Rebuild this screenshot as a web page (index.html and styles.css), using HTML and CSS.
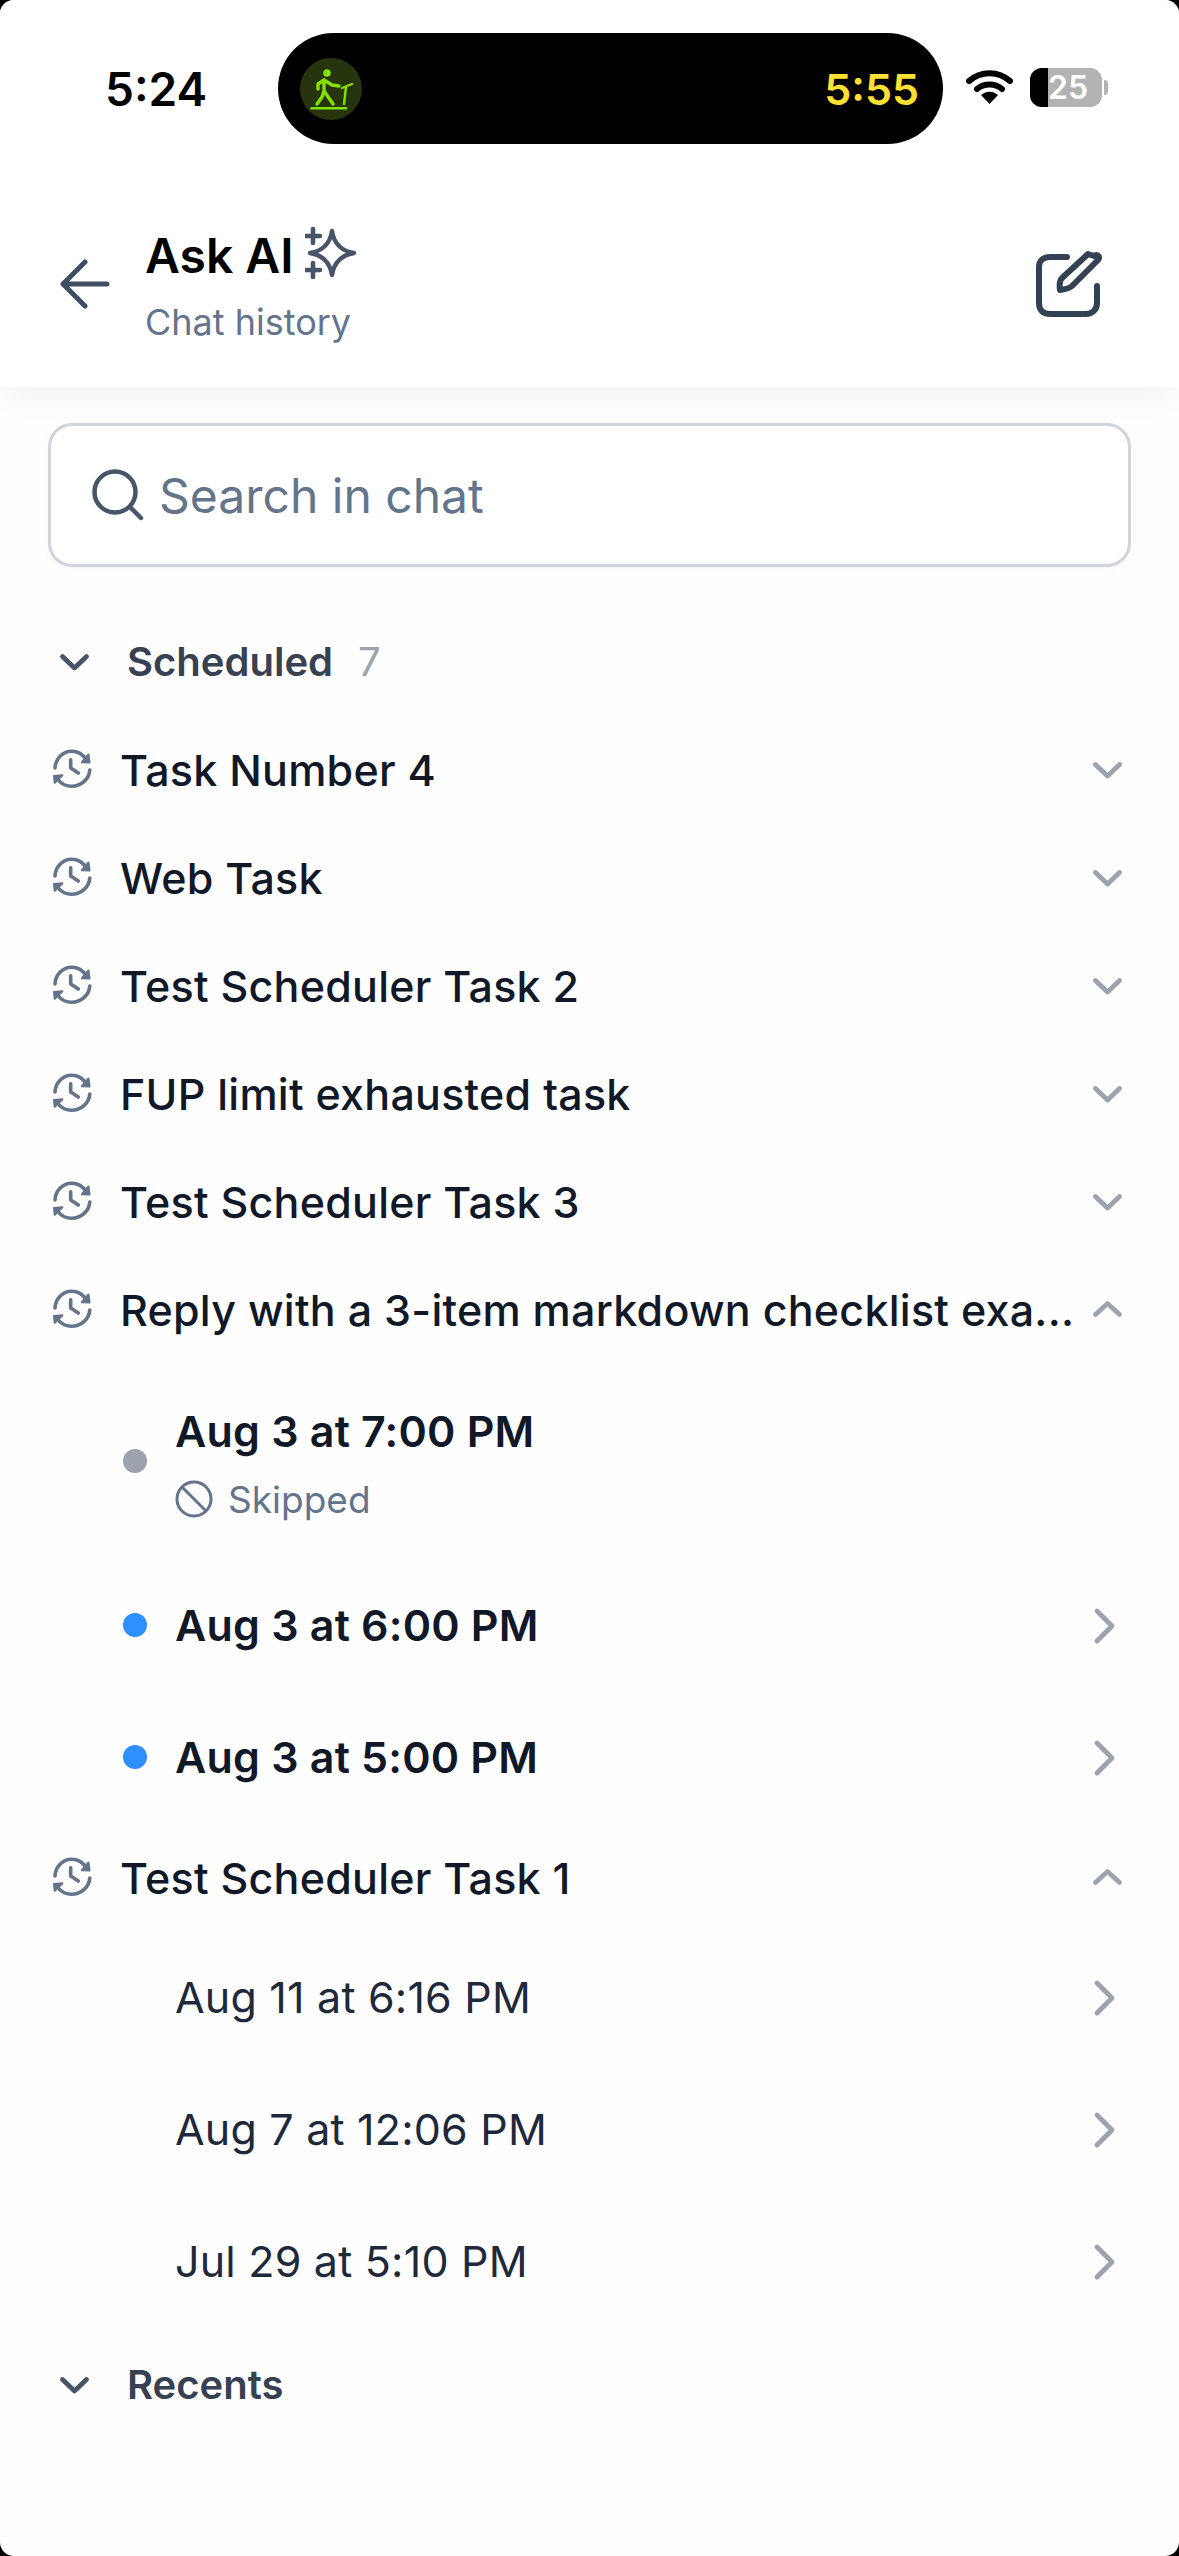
FILE: index.html
```html
<!DOCTYPE html>
<html lang="en">
<head>
    <meta charset="UTF-8">
    <meta name="viewport" content="width=device-width, initial-scale=1.0">
    <title>Ask AI - Chat history</title>
    <link rel="stylesheet" href="styles.css">
</head>
<body>
    <!-- Icons used several times -->
    <svg class="icon-defs" aria-hidden="true">
        <symbol id="i-history" viewBox="0 0 40 40">
            <path d="M3 19C3.500 9.500 11 2.300 19.700 2.300C26 2.300 31 5.500 34.200 10.700" fill="none" stroke="currentColor" stroke-width="3.600" stroke-linecap="round"/>
            <path d="M36.500 5.500L37.600 13.600L29.800 13.200Z" fill="currentColor" stroke="currentColor" stroke-width="2" stroke-linejoin="round"/>
            <path d="M37.800 21C37 30.500 29 37.300 19.700 37.300C14 37.300 9.500 35 6.300 31" fill="none" stroke="currentColor" stroke-width="3.600" stroke-linecap="round"/>
            <path d="M2 27L2.700 33.800L10.400 26.200Z" fill="currentColor" stroke="currentColor" stroke-width="2" stroke-linejoin="round"/>
            <path d="M18.700 10.700V19L26.300 24" fill="none" stroke="currentColor" stroke-width="3.600" stroke-linecap="round" stroke-linejoin="round"/>
        </symbol>
        <symbol id="i-down" viewBox="0 0 48 48">
            <path d="M12.500 19.500L24.500 31L36.500 19.500" fill="none" stroke="currentColor" stroke-width="4.800" stroke-linecap="round" stroke-linejoin="round"/>
        </symbol>
        <symbol id="i-up" viewBox="0 0 48 48">
            <path d="M12.500 29.500L24.500 18.500L36.500 29.500" fill="none" stroke="currentColor" stroke-width="4.800" stroke-linecap="round" stroke-linejoin="round"/>
        </symbol>
        <symbol id="i-right" viewBox="0 0 48 48">
            <path d="M16 10L31 25L16 40" fill="none" stroke="currentColor" stroke-width="4.800" stroke-linecap="round" stroke-linejoin="round"/>
        </symbol>
    </svg>

    <div class="app">
        <!-- Status bar + header -->
        <header class="top-bar">
            <div class="status-bar">
                <span class="clock">5:24</span>
                <div class="island">
                    <div class="activity-icon">
                        <svg width="62" height="62" viewBox="0 0 62 62">
                            <circle cx="27" cy="15" r="3.800" fill="#84e000"/>
                            <path d="M24 22L24 34M24 22L18 26L18 31M24 22L32 27L39 28M24 33L33 46M24 33L22 39L17 46" fill="none" stroke="#84e000" stroke-width="3.400" stroke-linecap="round" stroke-linejoin="round"/>
                            <path d="M44 46L46 29M42 30L52 26" fill="none" stroke="#84e000" stroke-width="2.400" stroke-linecap="round" stroke-linejoin="round"/>
                            <path d="M11 49H47V51.500H10Z" fill="#84e000"/>
                        </svg>
                    </div>
                    <span class="activity-time">5:55</span>
                </div>
                <svg class="wifi" width="47" height="36" viewBox="0 0 47 36">
                    <path d="M3 12C14.500 1.500 32.500 1.500 44 12" fill="none" stroke="#000" stroke-width="6" stroke-linecap="round"/>
                    <path d="M11 20C18 14 29 14 36 20" fill="none" stroke="#000" stroke-width="6" stroke-linecap="round"/>
                    <path d="M15 26C20 21.500 27 21.500 32 26L23.500 35Z" fill="#000"/>
                </svg>
                <div class="battery">
                    <div class="battery-body">
                        <div class="battery-level"></div>
                        <span class="battery-text">25</span>
                    </div>
                    <div class="battery-nub"></div>
                </div>
            </div>

            <div class="title-row">
                <button class="icon-btn back-btn" aria-label="Back">
                    <svg width="52" height="52" viewBox="0 0 52 52">
                        <path d="M27 5L5 27L27 49M5.500 27H49" fill="none" stroke="#3f4d63" stroke-width="5" stroke-linecap="round" stroke-linejoin="round"/>
                    </svg>
                </button>
                <div class="title-text">
                    <div class="title-line">
                        <h1>Ask AI</h1>
                        <svg class="sparkle" width="52" height="52" viewBox="0 0 52 52">
                            <path d="M27 4Q30 23 49 26Q30 29 27 48Q24 29 5 26Q24 23 27 4Z" fill="none" stroke="#475569" stroke-width="4.400" stroke-linejoin="round"/>
                            <path d="M8 2V16M1 9H15M8 36V50M1 43H15" fill="none" stroke="#475569" stroke-width="4.600" stroke-linecap="round"/>
                        </svg>
                    </div>
                    <div class="subtitle">Chat history</div>
                </div>
                <button class="icon-btn edit-btn" aria-label="New chat">
                    <svg width="68" height="68" viewBox="0 0 68 68">
                        <path d="M31 8H14C7 8 3 12 3 18V54C3 61 7 65 14 65H50C56 65 61 61 61 54V37" fill="none" stroke="#334155" stroke-width="6" stroke-linecap="round"/>
                        <path d="M58 6C61 3 65 7 62 10L36 36C34 38 31 39 24 40C23 33 24 30 26 28L52 4Z" transform="translate(0 1)" fill="none" stroke="#334155" stroke-width="6" stroke-linejoin="round"/>
                    </svg>
                </button>
            </div>
        </header>

        <main class="content">
            <div class="search-box">
                <svg class="search-icon" width="52" height="52" viewBox="0 0 52 52">
                    <circle cx="23" cy="23" r="20.500" fill="none" stroke="#475569" stroke-width="4.500"/>
                    <path d="M38 38L49 49" fill="none" stroke="#475569" stroke-width="4.500" stroke-linecap="round"/>
                </svg>
                <span class="search-placeholder">Search in chat</span>
            </div>

            <!-- Scheduled -->
            <div class="section-row">
                <svg class="section-chevron"><use href="#i-down"/></svg>
                <span class="section-name">Scheduled</span>
                <span class="section-count">7</span>
            </div>

            <div class="task-row">
                <svg class="task-icon"><use href="#i-history"/></svg>
                <span class="task-name">Task Number 4</span>
                <svg class="chevron"><use href="#i-down"/></svg>
            </div>
            <div class="task-row">
                <svg class="task-icon"><use href="#i-history"/></svg>
                <span class="task-name">Web Task</span>
                <svg class="chevron"><use href="#i-down"/></svg>
            </div>
            <div class="task-row">
                <svg class="task-icon"><use href="#i-history"/></svg>
                <span class="task-name">Test Scheduler Task 2</span>
                <svg class="chevron"><use href="#i-down"/></svg>
            </div>
            <div class="task-row">
                <svg class="task-icon"><use href="#i-history"/></svg>
                <span class="task-name">FUP limit exhausted task</span>
                <svg class="chevron"><use href="#i-down"/></svg>
            </div>
            <div class="task-row">
                <svg class="task-icon"><use href="#i-history"/></svg>
                <span class="task-name">Test Scheduler Task 3</span>
                <svg class="chevron"><use href="#i-down"/></svg>
            </div>
            <div class="task-row">
                <svg class="task-icon"><use href="#i-history"/></svg>
                <span class="task-name">Reply with a 3-item markdown checklist exa...</span>
                <svg class="chevron"><use href="#i-up"/></svg>
            </div>

            <div class="run-row run-row-tall">
                <span class="dot dot-gray"></span>
                <div class="run-text">
                    <span class="run-date unread">Aug 3 at 7:00 PM</span>
                    <div class="run-status">
                        <svg width="38" height="38" viewBox="0 0 38 38">
                            <circle cx="19" cy="19" r="17" fill="none" stroke="#64748b" stroke-width="3"/>
                            <path d="M7 7L31 31" fill="none" stroke="#64748b" stroke-width="3"/>
                        </svg>
                        <span>Skipped</span>
                    </div>
                </div>
            </div>
            <div class="run-row">
                <span class="dot dot-blue"></span>
                <span class="run-date unread">Aug 3 at 6:00 PM</span>
                <svg class="chevron chevron-right"><use href="#i-right"/></svg>
            </div>
            <div class="run-row">
                <span class="dot dot-blue"></span>
                <span class="run-date unread">Aug 3 at 5:00 PM</span>
                <svg class="chevron chevron-right"><use href="#i-right"/></svg>
            </div>

            <div class="task-row">
                <svg class="task-icon"><use href="#i-history"/></svg>
                <span class="task-name">Test Scheduler Task 1</span>
                <svg class="chevron"><use href="#i-up"/></svg>
            </div>

            <div class="run-row">
                <span class="dot"></span>
                <span class="run-date">Aug 11 at 6:16 PM</span>
                <svg class="chevron chevron-right"><use href="#i-right"/></svg>
            </div>
            <div class="run-row">
                <span class="dot"></span>
                <span class="run-date">Aug 7 at 12:06 PM</span>
                <svg class="chevron chevron-right"><use href="#i-right"/></svg>
            </div>
            <div class="run-row">
                <span class="dot"></span>
                <span class="run-date">Jul 29 at 5:10 PM</span>
                <svg class="chevron chevron-right"><use href="#i-right"/></svg>
            </div>

            <!-- Recents -->
            <div class="section-row section-recents">
                <svg class="section-chevron"><use href="#i-down"/></svg>
                <span class="section-name">Recents</span>
            </div>
        </main>
    </div>
</body>
</html>
```

FILE: styles.css
```css
/* Base */
* {
    box-sizing: border-box;
}

html, body {
    margin: 0;
    padding: 0;
    background: #000;
}

body {
    font-family: "Inter", "Noto Sans", sans-serif;
    color: #111827;
}

.icon-defs {
    display: none;
}

.app {
    width: 1179px;
    height: 2556px;
    overflow: hidden;
    background: #fefefe;
    border-radius: 14px;
}

/* Header */
.top-bar {
    height: 387px;
    background: #fff;
    box-shadow: 0 8px 34px -6px rgba(17, 24, 39, 0.08);
    position: relative;
}

.status-bar {
    display: flex;
    align-items: center;
    height: 111px;
    padding: 33px 0 0 105px;
    box-sizing: content-box;
}

.clock {
    width: 173px;
    font-size: 46px;
    font-weight: 600;
    color: #000;
}

.island {
    display: flex;
    align-items: center;
    justify-content: space-between;
    width: 665px;
    height: 111px;
    padding: 0 24px 0 22px;
    background: #000;
    border-radius: 56px;
}

.activity-icon {
    width: 62px;
    height: 62px;
    border-radius: 50%;
    background: #27350f;
}

.activity-icon svg {
    display: block;
}

.activity-time {
    font-size: 43px;
    font-weight: 600;
    color: #ffe033;
}

.wifi {
    margin-left: 23px;
    margin-top: -3px;
}

.battery {
    display: flex;
    align-items: center;
    margin-left: 17px;
    margin-top: -2px;
}

.battery-body {
    display: flex;
    align-items: center;
    width: 72px;
    height: 39px;
    border-radius: 12px;
    background: #b3b3b3;
    overflow: hidden;
}

.battery-level {
    width: 18px;
    height: 100%;
    background: #000;
}

.battery-text {
    font-size: 32px;
    font-weight: 600;
    color: #fff;
}

.battery-nub {
    width: 4px;
    height: 15px;
    margin-left: 2px;
    background: #b3b3b3;
    border-radius: 0 4px 4px 0;
}

.title-row {
    display: flex;
    align-items: center;
    padding: 77px 75px 0 58px;
}

.icon-btn {
    display: flex;
    padding: 0;
    border: none;
    background: none;
}

.title-text {
    flex: 1;
    margin-left: 35px;
    margin-top: 3px;
}

.title-line {
    display: flex;
    align-items: center;
    height: 62px;
}

.title-line h1 {
    margin: 0;
    font-size: 48px;
    font-weight: 600;
    color: #000;
}

.sparkle {
    margin-left: 11px;
    margin-top: -4px;
}

.subtitle {
    margin-top: 14px;
    font-size: 36px;
    line-height: 44px;
    color: #64748b;
}

/* Search */
.content {
    padding: 36px 48px 0;
}

.search-box {
    display: flex;
    align-items: center;
    height: 144px;
    padding-left: 41px;
    background: #fff;
    border: 3px solid #d1d3dd;
    border-radius: 24px;
    box-shadow: 0 2px 8px rgba(17, 24, 39, 0.03);
}

.search-placeholder {
    margin-left: 15px;
    font-size: 48px;
    color: #64748b;
}

/* Lists */
.section-row {
    display: flex;
    align-items: center;
    height: 108px;
    margin-top: 40px;
    padding-left: 2px;
}

.section-recents {
    margin-top: 3px;
}

.section-chevron {
    width: 48px;
    height: 48px;
    color: #475569;
}

.section-name {
    margin-left: 29px;
    font-size: 40px;
    font-weight: 600;
    color: #374151;
}

.section-count {
    margin-left: 25px;
    font-size: 40px;
    color: #9ca3af;
}

.task-row {
    display: flex;
    align-items: center;
    height: 108px;
}

.task-icon {
    width: 40px;
    height: 40px;
    margin-left: 4px;
    margin-right: 28px;
    flex-shrink: 0;
    color: #64748b;
}

.task-name {
    flex: 1;
    min-width: 0;
    padding-top: 2px;
    font-size: 43px;
    font-weight: 500;
    letter-spacing: 0.25px;
    color: #111827;
    white-space: nowrap;
}

.chevron {
    width: 48px;
    height: 48px;
    margin-left: 10px;
    flex-shrink: 0;
    color: #9ca3af;
}

.chevron-right {
    margin-left: auto;
    margin-right: 2px;
}

.run-row {
    display: flex;
    align-items: center;
    height: 132px;
    padding-left: 75px;
}

.run-row-tall {
    height: 196px;
}

.run-text {
    padding-top: 4px;
}

.dot {
    width: 24px;
    height: 24px;
    margin-right: 28px;
    flex-shrink: 0;
    border-radius: 50%;
}

.dot-gray {
    background: #9ca3af;
}

.dot-blue {
    background: #2e8fff;
}

.run-date {
    font-size: 43px;
    font-weight: 400;
    letter-spacing: 0.2px;
    color: #1e293b;
}

.run-date.unread {
    font-weight: 600;
    color: #111827;
}

.run-status {
    display: flex;
    align-items: center;
    margin-top: 20px;
    font-size: 37px;
    color: #64748b;
}

.run-status svg {
    margin-right: 15px;
}
```
